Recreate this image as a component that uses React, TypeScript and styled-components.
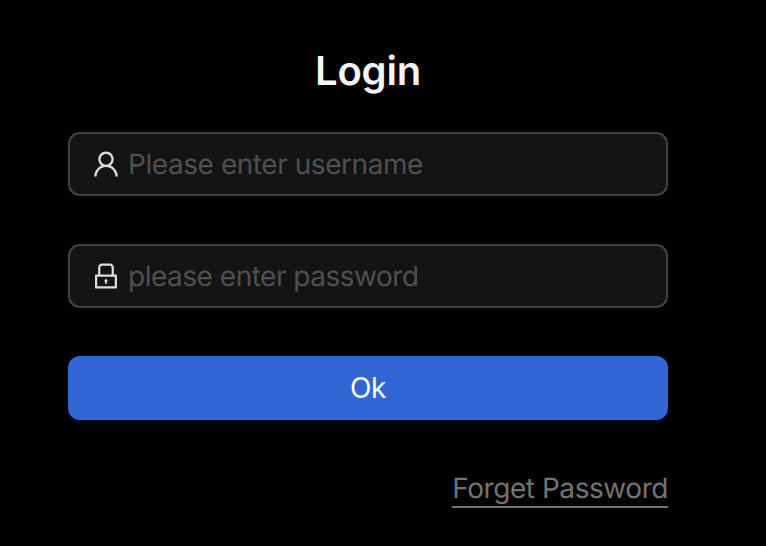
import React from 'react';
import styled, { createGlobalStyle } from 'styled-components';

const GlobalStyle = createGlobalStyle`
  * { box-sizing: border-box; }
  body {
    margin: 0;
    background: #000;
    font-family: Inter, "Liberation Sans", sans-serif;
    text-rendering: geometricPrecision;
  }
`;
const Page = styled.main`
  width: 766px;
  height: 546px;
  padding: 46px 98px 0 68px;
  background: #000;
  overflow: hidden;
`;
const Title = styled.h1`
  margin: 0 0 36px;
  height: 50px;
  line-height: 50px;
  font-size: 40px;
  font-weight: 600;
  letter-spacing: -0.2px;
  text-align: center;
  color: #f5f5f5;
`;
const Form = styled.form`
  display: flex;
  flex-direction: column;
  gap: 48px;
`;
const Field = styled.label`
  display: flex;
  align-items: center;
  gap: 8px;
  height: 64px;
  padding: 0 22px;
  border: 2px solid #424242;
  border-radius: 12px;
  background: #141414;
  color: #dcdcdc;
  svg { flex: none; width: 28px; height: 28px; }
`;
const Input = styled.input<{ $spacing: number }>`
  flex: 1;
  min-width: 0;
  padding: 0;
  border: 0;
  outline: 0;
  background: transparent;
  color: #dcdcdc;
  font: 425 28px Inter, sans-serif;
  letter-spacing: ${(p) => p.$spacing}px;
  text-rendering: geometricPrecision;
  &::placeholder { color: #4f4f4f; opacity: 1; }
`;
const Submit = styled.button`
  height: 64px;
  padding: 0;
  border: 0;
  border-radius: 12px;
  background: #3266d5;
  box-shadow: 0 4px 0 #020818;
  color: #fff;
  font: 425 28px Inter, sans-serif;
  letter-spacing: -0.4px;
`;
const Forgot = styled.a`
  align-self: flex-end;
  height: 40px;
  line-height: 40px;
  border-bottom: 2px solid #737373;
  color: #737373;
  font-size: 28px;
  font-weight: 425;
  letter-spacing: -0.44px;
`;
const UserIcon = () => (
  <svg viewBox="64 64 896 896" fill="currentColor">
    <path d="M858.5 763.6a374 374 0 00-80.6-119.5 375.63 375.63 0 00-119.5-80.6c-.4-.2-.8-.3-1.2-.5C719.5 518 760 444.7 760 362c0-137-111-248-248-248S264 225 264 362c0 82.700 40.500 156 102.800 201.100-.4.2-.8.3-1.200.5-44.800 18.900-85 46-119.500 80.600a375.630 375.630 0 00-80.600 119.500A371.700 371.700 0 00136 901.800a8 8 0 008 8.200h60c4.400 0 7.900-3.500 8-7.800 2-77.200 33-149.500 87.800-204.300 56.700-56.700 132-87.900 212.200-87.900s155.500 31.200 212.200 87.900C779 752.700 810 825 812 902.200c.1 4.400 3.600 7.800 8 7.800h60a8 8 0 008-8.200c-1-47.800-10.900-94.300-29.500-138.200zM512 534c-45.900 0-89.100-17.900-121.600-50.400S340 407.900 340 362c0-45.900 17.900-89.100 50.400-121.600S466.100 190 512 190s89.100 17.900 121.600 50.400S684 316.100 684 362c0 45.900-17.900 89.100-50.400 121.600S557.900 534 512 534z" />
  </svg>
);
const LockIcon = () => (
  <svg viewBox="64 64 896 896" fill="currentColor">
    <path d="M832 464h-68V240c0-70.700-57.300-128-128-128H388c-70.700 0-128 57.300-128 128v224h-68c-17.700 0-32 14.300-32 32v384c0 17.700 14.300 32 32 32h640c17.700 0 32-14.300 32-32V496c0-17.700-14.300-32-32-32zM332 240c0-30.900 25.100-56 56-56h248c30.900 0 56 25.100 56 56v224H332V240zm460 600H232V536h560v304zM484 701v53c0 4.400 3.600 8 8 8h40c4.400 0 8-3.600 8-8v-53a48.010 48.010 0 10-56 0z" />
  </svg>
);

export default function App() {
  return (
    <>
      <GlobalStyle />
      <Page>
        <Title>Login</Title>
        <Form onSubmit={(e) => e.preventDefault()}>
          <Field>
            <UserIcon />
            <Input placeholder="Please enter username" $spacing={-0.44} />
          </Field>
          <Field>
            <LockIcon />
            <Input type="password" placeholder="please enter password" $spacing={-0.49} />
          </Field>
          <Submit type="submit">Ok</Submit>
          <Forgot>Forget Password</Forgot>
        </Form>
      </Page>
    </>
  );
}
